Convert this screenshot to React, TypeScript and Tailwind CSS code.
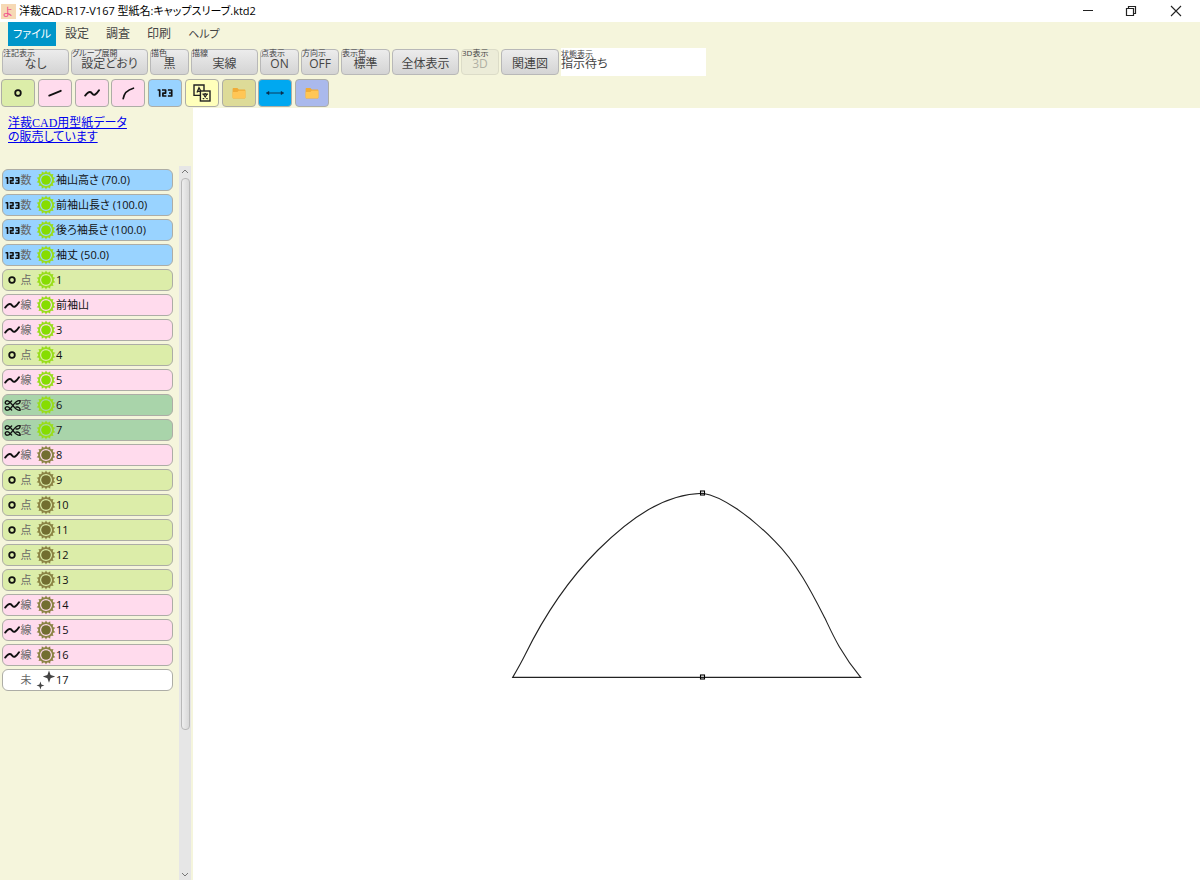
import { useState, type ReactNode } from "react";

type Kind = "number" | "point" | "line" | "transform" | "empty";

interface Item {
  kind: Kind;
  name: string;
  on?: boolean;
}

const items: Item[] = [
  { kind: "number", name: "袖山高さ (70.0)", on: true },
  { kind: "number", name: "前袖山長さ (100.0)", on: true },
  { kind: "number", name: "後ろ袖長さ (100.0)", on: true },
  { kind: "number", name: "袖丈 (50.0)", on: true },
  { kind: "point", name: "1", on: true },
  { kind: "line", name: "前袖山", on: true },
  { kind: "line", name: "3", on: true },
  { kind: "point", name: "4", on: true },
  { kind: "line", name: "5", on: true },
  { kind: "transform", name: "6", on: true },
  { kind: "transform", name: "7", on: true },
  { kind: "line", name: "8" },
  { kind: "point", name: "9" },
  { kind: "point", name: "10" },
  { kind: "point", name: "11" },
  { kind: "point", name: "12" },
  { kind: "point", name: "13" },
  { kind: "line", name: "14" },
  { kind: "line", name: "15" },
  { kind: "line", name: "16" },
  { kind: "empty", name: "17" },
];

const menus = [
  { name: "ファイル", style: "w-12 bg-[#0096c9] text-[11px] text-white" },
  { name: "設定", style: "px-2 text-xs" },
  { name: "調査", style: "px-2 text-xs" },
  { name: "印刷", style: "px-2 text-xs" },
  { name: "ヘルプ", style: "px-2 text-[11px]" },
];

const options = [
  { label: "注記表示", value: "なし", width: "w-[67px]" },
  { label: "グループ展開", value: "設定どおり", width: "w-[77px]" },
  { label: "描色", value: "黒", width: "w-[39px]" },
  { label: "描線", value: "実線", width: "w-[67px]" },
  { label: "点表示", value: "ON", width: "w-[39px]" },
  { label: "方向示", value: "OFF", width: "w-[38px]" },
  { label: "表示色", value: "標準", width: "w-[49px]" },
  { label: "", value: "全体表示", width: "w-[67px]" },
  { label: "3D表示", value: "3D", width: "w-[38px]", disabled: true },
  { label: "", value: "関連図", width: "w-[58px]" },
];

const NumberIcon = ({ size }: { size: number }) => (
  <svg width={size} height={size} viewBox="0 0 16 16" fill="none" stroke="#111" strokeWidth="1.7" strokeLinejoin="round" className="shrink-0">
    <path d="M0.6 5H2.7V11.8" />
    <path d="M5 5H8.6V8.1H5.9V11H9.4" />
    <path d="M10.9 5H14.7V11H10.9M12 8H14.7" />
  </svg>
);

const PointIcon = () => (
  <svg width="16" height="16" viewBox="0 0 16 16" fill="none" stroke="#111" strokeWidth="1.8">
    <circle cx="8" cy="8" r="2.8" />
  </svg>
);

const WaveIcon = () => (
  <svg width="16" height="16" viewBox="0 0 16 16" fill="none" stroke="#111" strokeWidth="1.9" strokeLinecap="round">
    <path d="M1.2 10.6C3.2 8 4.8 6.2 6.6 7.2C8.4 8.2 9 10.6 11 9.6C12.6 8.8 13.8 7 15 5.2" />
  </svg>
);

const SlashIcon = () => (
  <svg width="16" height="16" viewBox="0 0 16 16" fill="none" stroke="#111" strokeWidth="1.8" strokeLinecap="round">
    <path d="M2.2 10.6L13.8 5.8" />
  </svg>
);

const ArcIcon = () => (
  <svg width="16" height="16" viewBox="0 0 16 16" fill="none" stroke="#111" strokeWidth="1.7" strokeLinecap="round">
    <path d="M3.2 13.6C4 8.8 7.4 4.8 13.4 3.2" />
  </svg>
);

const TransformIcon = () => (
  <svg width="17" height="13" viewBox="0 0 17 13" fill="none" stroke="#111" strokeWidth="1.35" strokeLinecap="round" className="shrink-0">
    <path d="M16 1.8C10.4 0.4 8.4 10 3.8 11.2C1.2 11.8 0.4 8.6 2.4 7.8C4.6 7 5.8 9.4 7.6 11" />
    <path d="M16 11.2C10.4 12.6 8.4 3 3.8 1.8C1.2 1.2 0.4 4.4 2.4 5.2C4.6 6 5.8 3.6 7.6 2" />
    <path d="M16 1.8C16.4 4.2 14.2 5.6 12 4.8M16 11.2C16.4 8.8 14.2 7.4 12 8.2" />
  </svg>
);

const TranslateIcon = () => (
  <svg width="18" height="18" viewBox="0 0 18 18" fill="none" stroke="#222" strokeWidth="1.4">
    <path d="M7.4 11.4H1V1H11V7" />
    <rect x="7.4" y="7" width="9.6" height="10" />
    <path d="M4 8.6L6 3.8L7.8 7M4.8 7.4H7" strokeWidth="1.3" />
    <path d="M9.4 10.2H15M12.2 9V10.2M13.8 10.4C13.2 12.4 11.8 13.8 9.8 14.8M10.6 10.4C11.2 12.4 12.6 13.8 14.6 14.8" strokeWidth="1.3" />
  </svg>
);

const FolderIcon = () => (
  <svg width="16" height="16" viewBox="0 0 16 16">
    <path d="M1.6 4.2C1.6 3.4 2 3 2.8 3H6.4L7.8 4.6H13.4C14 4.6 14.4 5 14.4 5.6V12.4C14.4 13 14 13.4 13.4 13.4H2.6C2 13.4 1.6 13 1.6 12.4Z" fill="#f0ac38" />
    <path d="M1.6 7H6.4L7.6 5.8H14.4V12.2C14.4 12.8 14 13.2 13.4 13.2H2.6C2 13.2 1.6 12.8 1.6 12.2Z" fill="#ffc655" />
  </svg>
);

const ArrowsIcon = () => (
  <svg width="20" height="16" viewBox="0 0 20 16" fill="none" stroke="#0a3a5c">
    <path d="M1.4 8H18.6" />
    <path d="M4 6.2L1.4 8L4 9.8ZM16 6.2L18.6 8L16 9.8Z" fill="#0a2a44" strokeWidth="0.5" />
  </svg>
);

const teeth = Array.from({ length: 14 }, (_, i) => (i * 360) / 14);

const GearIcon = ({ on }: { on?: boolean }) => {
  const ring = on ? "#99dd1c" : "#8b8445";
  const core = on ? "#86dd00" : "#726e30";
  return (
    <svg width="20" height="20" viewBox="0 0 20 20" className="shrink-0">
      {teeth.map((angle) => (
        <path key={angle} d="M8.4 3.2L10 0.4L11.6 3.2Z" fill={ring} transform={`rotate(${angle} 10 10)`} />
      ))}
      <circle cx="10" cy="10" r="6.9" fill="none" stroke={ring} strokeWidth="1.8" />
      <circle cx="10" cy="10" r="4.8" fill={core} />
    </svg>
  );
};

const SparkleIcon = () => (
  <svg width="20" height="20" viewBox="0 0 20 20" fill="#444" className="shrink-0">
    <path d="M13 0.6L14.6 5L19.2 6.6L14.6 8.2L13 12.8L11.4 8.2L6.8 6.6L11.4 5Z" />
    <path d="M4.4 11.4L5.4 14.4L8.4 15.4L5.4 16.4L4.4 19.4L3.4 16.4L0.6 15.4L3.4 14.4Z" />
  </svg>
);

const kinds: Record<Kind, { label: string; color: string; icon: ReactNode }> = {
  number: { label: "数", color: "bg-[#99d3ff]", icon: <NumberIcon size={15} /> },
  point: { label: "点", color: "bg-[#dceda9]", icon: <PointIcon /> },
  line: { label: "線", color: "bg-[#ffdbed]", icon: <WaveIcon /> },
  transform: { label: "変", color: "bg-[#a9d4aa]", icon: <TransformIcon /> },
  empty: { label: "未", color: "bg-white", icon: null },
};

const tools = [
  { name: "点", color: "bg-[#dceda9]", icon: <PointIcon /> },
  { name: "直線", color: "bg-[#ffdbed]", icon: <SlashIcon /> },
  { name: "曲線", color: "bg-[#ffdbed]", icon: <WaveIcon /> },
  { name: "円弧", color: "bg-[#ffdbed]", icon: <ArcIcon /> },
  { name: "数値", color: "bg-[#99d3ff]", icon: <NumberIcon size={16} /> },
  { name: "文字", color: "bg-[#ffffbb]", icon: <TranslateIcon /> },
  { name: "グループ", color: "bg-[#dddb98]", icon: <FolderIcon /> },
  { name: "寸法", color: "bg-[#00a8f0]", icon: <ArrowsIcon /> },
  { name: "フォルダ", color: "bg-[#aab9ec]", icon: <FolderIcon /> },
];

const TitleBar = () => (
  <header className="flex h-[22px] items-center bg-white text-black">
    <svg width="15" height="15" viewBox="0 0 15 15" className="ml-px mr-[3px]">
      <rect width="15" height="15" fill="#f6d9b5" />
      <text x="2" y="12" fontSize="11" fill="#f0508c">よ</text>
    </svg>
    <h1 className="text-[11px]">洋裁CAD-R17-V167 型紙名:キャップスリーブ.ktd2</h1>
    <div className="ml-auto flex h-full">
      <button aria-label="最小化" className="grid w-[43px] place-items-center">
        <svg width="12" height="12" stroke="#222"><path d="M1 5.5H11" /></svg>
      </button>
      <button aria-label="元に戻す" className="grid w-[43px] place-items-center">
        <svg width="12" height="12" fill="none" stroke="#222" strokeWidth="1.2">
          <path d="M1.5 3.5H8.5V10.5H1.5ZM3.5 3.5V1.5H10.5V8.5H8.5" />
        </svg>
      </button>
      <button aria-label="閉じる" className="grid w-12 place-items-center">
        <svg width="12" height="12" stroke="#222" strokeWidth="1.1"><path d="M1 1L11 11M11 1L1 11" /></svg>
      </button>
    </div>
  </header>
);

const Toolbar = () => (
  <>
    <nav className="flex h-6 gap-px pl-2 text-[#444]">
      {menus.map((menu) => (
        <button key={menu.name} className={menu.style}>
          {menu.name}
        </button>
      ))}
    </nav>
    <div className="mt-0.5 flex h-7 items-center gap-0.5 pl-0.5">
      {options.map((option) => (
        <button
          key={option.value}
          disabled={option.disabled}
          className={`relative h-[26px] shrink-0 rounded-sm border pt-1 text-xs leading-3 ${option.width} ${
            option.disabled
              ? "border-[#dcdcc8] bg-[#ececd8] text-[#b0b0a4]"
              : "border-[#b8b8b8] bg-linear-to-b from-[#ececec] to-[#d4d4d4] text-[#444]"
          }`}
        >
          {option.label && (
            <span className="absolute -top-px left-0 whitespace-nowrap text-[8px] leading-[8px] text-[#444]">
              {option.label}
            </span>
          )}
          {option.value}
        </button>
      ))}
      <div className="flex h-full w-[145px] flex-col bg-white pt-0.5 text-[#444]">
        <label htmlFor="status" className="text-[8px] leading-[8px]">状態表示</label>
        <output id="status" className="text-xs leading-3">指示待ち</output>
      </div>
    </div>
    <div className="mb-px ml-px mt-[3px] flex w-[328px] justify-between">
      {tools.map((tool) => (
        <button
          key={tool.name}
          aria-label={tool.name}
          className={`flex h-7 w-[34px] items-center justify-center rounded border border-[#adada6] ${tool.color}`}
        >
          {tool.icon}
        </button>
      ))}
    </div>
  </>
);

const ItemRow = ({ item, onToggle }: { item: Item; onToggle: () => void }) => {
  const kind = kinds[item.kind];
  return (
    <li>
      <button
        onClick={onToggle}
        className={`flex h-[22px] w-full items-center overflow-hidden rounded-md border border-[#adada6] pl-px text-[11px] ${kind.color}`}
      >
        <span className="flex w-4 shrink-0 items-center justify-center">{kind.icon}</span>
        <span className="mr-1 w-3 shrink-0 text-[#666]">{kind.label}</span>
        {item.kind === "empty" ? <SparkleIcon /> : <GearIcon on={item.on} />}
        <span className="whitespace-nowrap text-[#111]">{item.name}</span>
      </button>
    </li>
  );
};

const ScrollBar = () => (
  <div className="flex w-3 flex-col items-center bg-[#e6e6e6]">
    <svg width="10" height="12" fill="none" stroke="#777"><path d="M2 7L5 4L8 7" /></svg>
    <div className="h-[552px] w-[9px] rounded-sm border border-[#b8b8b8] bg-linear-to-r from-[#eeeeee] to-[#d8d8d8]" />
    <svg width="10" height="10" fill="none" stroke="#777" className="mt-auto"><path d="M2 3L5 6L8 3" /></svg>
  </div>
);

const Pattern = () => (
  <svg className="h-full w-full" viewBox="193 108 1007 772" preserveAspectRatio="xMinYMin meet" fill="none" stroke="#222" strokeWidth="1.1">
    <path d="M512.7 677.4C517 670 521 663 525 655C547 610 573 575 598 550C630 518 664 494 702.7 493.2C722 496 750 516 775 541.3C797 563 813 595 825 618.3C832 633 840 652 860.7 677.4Z" />
    <rect x="700.5" y="491" width="4" height="4" stroke="#000" />
    <rect x="700.5" y="675" width="4" height="4" stroke="#000" />
  </svg>
);

export default function App() {
  const [list, setList] = useState(items);

  const toggle = (index: number) =>
    setList((prev) => prev.map((item, i) => (i === index ? { ...item, on: !item.on } : item)));

  return (
    <div className="flex min-h-screen flex-col bg-[#f5f5dc] font-['Open_Sans','Noto_Sans_CJK_JP',sans-serif] [font-feature-settings:'palt']">
      <TitleBar />
      <Toolbar />
      <div className="flex flex-1">
        <aside className="flex w-[193px] shrink-0 flex-col">
          <a
            href="#data"
            className="mb-[22px] ml-2 mt-2 block font-['Liberation_Serif','Noto_Sans_CJK_JP',serif] text-xs leading-[14px] text-[#0000ee] underline"
          >
            洋裁CAD用型紙データ
            <br />
            の販売しています
          </a>
          <div className="flex flex-1 justify-between pr-0.5">
            <ul className="flex w-[173px] flex-col gap-[3px] pl-0.5 pt-[3px]">
              {list.map((item, i) => (
                <ItemRow key={item.name} item={item} onToggle={() => toggle(i)} />
              ))}
            </ul>
            <ScrollBar />
          </div>
        </aside>
        <main className="flex-1 bg-white">
          <Pattern />
        </main>
      </div>
    </div>
  );
}
